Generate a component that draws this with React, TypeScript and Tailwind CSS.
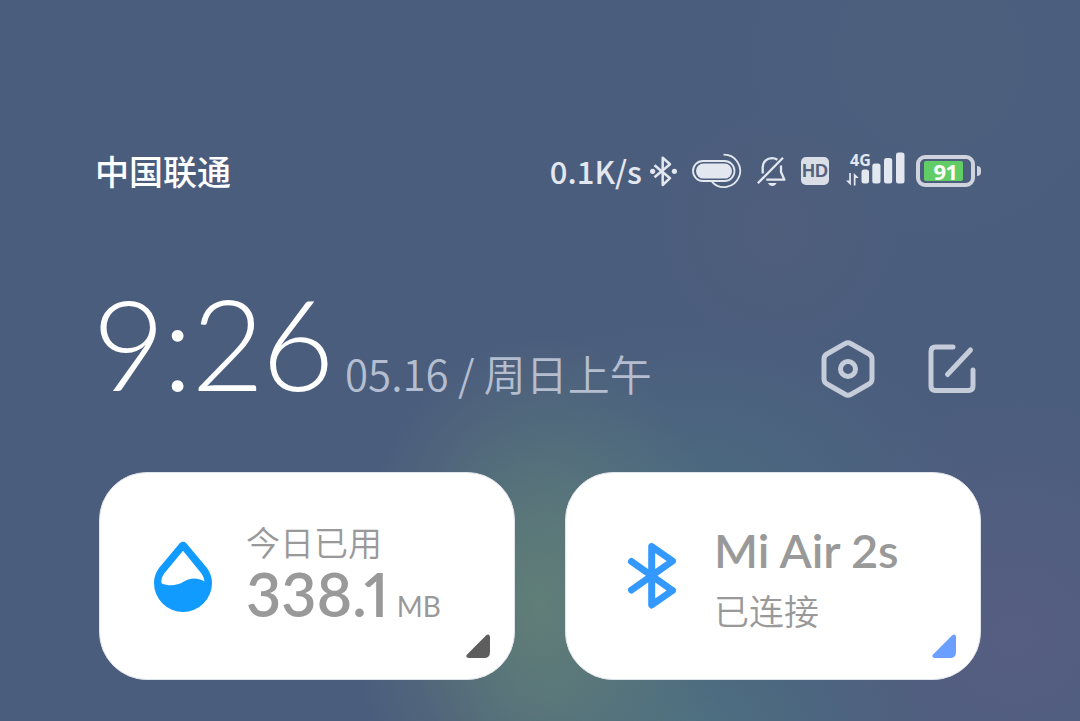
import React from "react";

// Small status bar glyphs, left to right
function StatusBluetooth() {
  return (
    <svg width="28" height="32" viewBox="0 0 28 32" fill="none" stroke="currentColor" strokeWidth="2.5" strokeLinejoin="round" aria-hidden="true">
      <path d="M4.500 10.300 20 23.200 12.700 30V2.700L20 9.300 4.500 22.300" />
      <circle cx="2.600" cy="16.300" r="2.600" fill="currentColor" stroke="none" />
      <circle cx="24.400" cy="16.300" r="2.600" fill="currentColor" stroke="none" />
    </svg>
  );
}

function FloatingPill() {
  return (
    <svg width="50" height="36" viewBox="0 0 50 36" fill="none" stroke="currentColor" strokeWidth="1.8" aria-hidden="true">
      <rect x="1" y="8" width="41.500" height="20" rx="10" />
      <rect x="4" y="10.600" width="36" height="15" rx="7.500" fill="currentColor" stroke="none" />
      <path d="M31.500 1.700A16.200 16.200 0 1 1 20 28.800" />
    </svg>
  );
}

function MutedBell() {
  return (
    <svg width="30" height="32" viewBox="0 0 30 32" fill="none" stroke="currentColor" strokeWidth="2.3" strokeLinejoin="round" aria-hidden="true">
      <path d="M.8 28.300 26 2.700" />
      <path d="M5.700 18.500V12C5.700 6.500 10 3.200 15 3.200c2.200 0 4 .6 5.400 1.500" />
      <path d="M24 10.500V17l3.400 7.600H9.300" />
      <path d="M11 28h8.600c-.9 2-2.500 2.900-4.300 2.900S11.900 30 11 28Z" fill="currentColor" stroke="none" />
    </svg>
  );
}

function Signal() {
  return (
    <div className="relative h-[38px] w-[59px]">
      <svg width="59" height="38" viewBox="0 0 59 38" fill="currentColor" aria-hidden="true">
        <rect x="15.500" y="17.500" width="7.500" height="14" rx="2.500" />
        <rect x="26.300" y="11.500" width="8.200" height="20" rx="2.500" />
        <rect x="38" y="6" width="8.200" height="25.500" rx="2.500" />
        <rect x="50" y=".5" width="8.500" height="31" rx="2.500" />
        <path d="M3.200 21h1.700v12.500L0 28.500h3.200ZM7.800 33.500V21l5 5H9.500v7.500Z" />
      </svg>
      <span className="absolute top-0 left-1 font-['Open_Sans'] text-base leading-4 font-bold">4G</span>
    </div>
  );
}

function Battery({ level }: { level: number }) {
  return (
    <div className="flex items-center gap-[2px]">
      <div className="relative h-8 w-[59px] rounded-[9px] border-4 border-[#cfd3dd] px-1 py-[2px]">
        <div className="h-full rounded-[2px] bg-[#62cd66]" style={{ width: `${level}%` }} />
        <span className="absolute inset-0 text-center font-['Open_Sans'] text-[22px] leading-6 font-bold text-white">{level}</span>
      </div>
      <div className="h-[10px] w-1 rounded-r-full bg-[#cfd3dd]" />
    </div>
  );
}

function StatusBar() {
  return (
    <header className="flex items-center justify-between">
      <span className="-ml-1 text-[34px] leading-10 font-medium text-white">中国联通</span>
      <div className="flex items-center text-[#e3e7f0]">
        <span className="mr-2 text-[31px] leading-10 font-medium">0.1K/s</span>
        <div className="mr-[14px]"><StatusBluetooth /></div>
        <div className="mr-[15px]"><FloatingPill /></div>
        <div className="mr-[14px]"><MutedBell /></div>
        <span className="mr-[17px] flex size-7 items-center justify-center rounded-[5px] bg-[#dadee7] font-['Liberation_Sans'] text-lg leading-7 font-bold text-[#53617e]">HD</span>
        <div className="mr-[11px]"><Signal /></div>
        <Battery level={91} />
      </div>
    </header>
  );
}

function ClockRow() {
  return (
    <section className="flex items-end justify-between">
      <div className="flex items-baseline gap-3">
        <time className="-ml-1 font-['Lato'] text-[126px] leading-[120px] font-light text-white">9:26</time>
        <span className="text-[42px] leading-[50px] font-[350] text-[#b4bed0]">05.16 / 周日上午</span>
      </div>
      <div className="flex items-center gap-[53px] pr-[5px] pb-[5px] text-[#c5ccda]">
        <button type="button" aria-label="设置">
          <svg width="54" height="58" viewBox="0 0 54 58" fill="none" stroke="currentColor" strokeWidth="5" strokeLinejoin="round">
            <path d="M24 3.700q3-1.700 6 0L48 14q3 1.700 3 5v20q0 3.300-3 5L30 54.300q-3 1.700-6 0L6 44q-3-1.700-3-5V19q0-3.300 3-5Z" />
            <circle cx="27" cy="29" r="7.500" />
          </svg>
        </button>
        <button type="button" aria-label="编辑">
          <svg width="48" height="50" viewBox="0 0 48 50" fill="none" stroke="currentColor" strokeWidth="5" strokeLinecap="round" strokeLinejoin="round">
            <path d="M25 3H7.500Q3 3 3 7.500v34.500q0 4.500 4.500 4.500h33q4.500 0 4.500-4.500V26" />
            <path d="M19.500 30.500 42.500 6" />
          </svg>
        </button>
      </div>
    </section>
  );
}

function CornerMark({ className }: { className: string }) {
  return (
    <svg className={`absolute right-6 bottom-[21px] ${className}`} width="24" height="24" viewBox="0 0 24 24" fill="currentColor" aria-hidden="true">
      <path d="M24 2.500V18q0 6-6 6H2.500Q-.8 23.500.8 20.800L20 1.400Q23-1 24 2.500Z" />
    </svg>
  );
}

const cardClass =
  "relative flex h-[208px] items-center rounded-[48px] border border-[#dfe4ea] bg-white text-left text-[#999999]";

function DataCard() {
  return (
    <button type="button" className={`${cardClass} gap-[34px] pl-[54px]`}>
      <svg width="58" height="71" viewBox="0 0 58 71" aria-hidden="true">
        <path fill="#129bff" d="M25.500 2.500c1.500-2.200 5.500-2.200 7 0L53 27c3.300 4.500 5 9.500 5 15A29 29 0 0 1 0 42c0-5.500 1.700-10.500 5-15Z" />
        <path fill="#fff" d="M29 9.700 47 32c2.300 3 3.300 5.500 3.300 8.500-7-4-14-3.700-20.300 0-7 4.300-15 5-22.300 2-1-3.500.3-7.500 3.300-11Z" />
      </svg>
      <span className="flex flex-col pt-2">
        <span className="text-[34px] leading-[40px] font-[350]">今日已用</span>
        <span className="flex items-baseline gap-2 font-['Lato']">
          <span className="text-[61px] leading-[64px] font-semibold">338.1</span>
          <span className="text-[28px] leading-[64px] font-normal">MB</span>
        </span>
      </span>
      <CornerMark className="text-[#5e5e5e]" />
    </button>
  );
}

function BluetoothCard() {
  return (
    <button type="button" className={`${cardClass} gap-[38px] pl-[62px]`}>
      <svg width="48" height="66" viewBox="0 0 48 66" fill="none" stroke="#3399ff" strokeWidth="7" strokeLinecap="round" strokeLinejoin="round" aria-hidden="true">
        <path d="M3.500 18.500 44.500 47.500 23.700 62V3.500L44.500 18 3.500 47" />
      </svg>
      <span className="flex flex-col pt-2">
        <span className="font-['Lato'] text-[47px] leading-[60px] font-semibold">Mi Air 2s</span>
        <span className="text-[35px] leading-[60px] font-[350]">已连接</span>
      </span>
      <CornerMark className="text-[#6b9fff]" />
    </button>
  );
}

export default function App() {
  return (
    <main className="min-h-screen bg-[#4b5d7d] bg-[radial-gradient(ellipse_190px_270px_at_50%_84%,#668776cc_0%,#66877688_35%,#66877633_70%,#66877600_100%),radial-gradient(ellipse_240px_140px_at_64%_100%,#4e7683bb_0%,#4e768300_100%),radial-gradient(ellipse_280px_170px_at_64%_68%,#4c6f82aa_0%,#4c6f8200_100%),radial-gradient(circle_at_94%_88%,#67608666_0%,#67608600_20%),radial-gradient(circle_at_86%_8%,#50697d44_0%,#50697d00_18%),radial-gradient(circle_at_72%_32%,#56607755_0%,#56607700_14%)] px-[99px] pt-[151px] pb-10 font-['Noto_Sans_CJK_SC',sans-serif] proportional-nums">
      <StatusBar />
      <div className="mt-[92px]">
        <ClockRow />
      </div>
      <section className="mt-[69px] grid grid-cols-2 gap-[50px]">
        <DataCard />
        <BluetoothCard />
      </section>
    </main>
  );
}
